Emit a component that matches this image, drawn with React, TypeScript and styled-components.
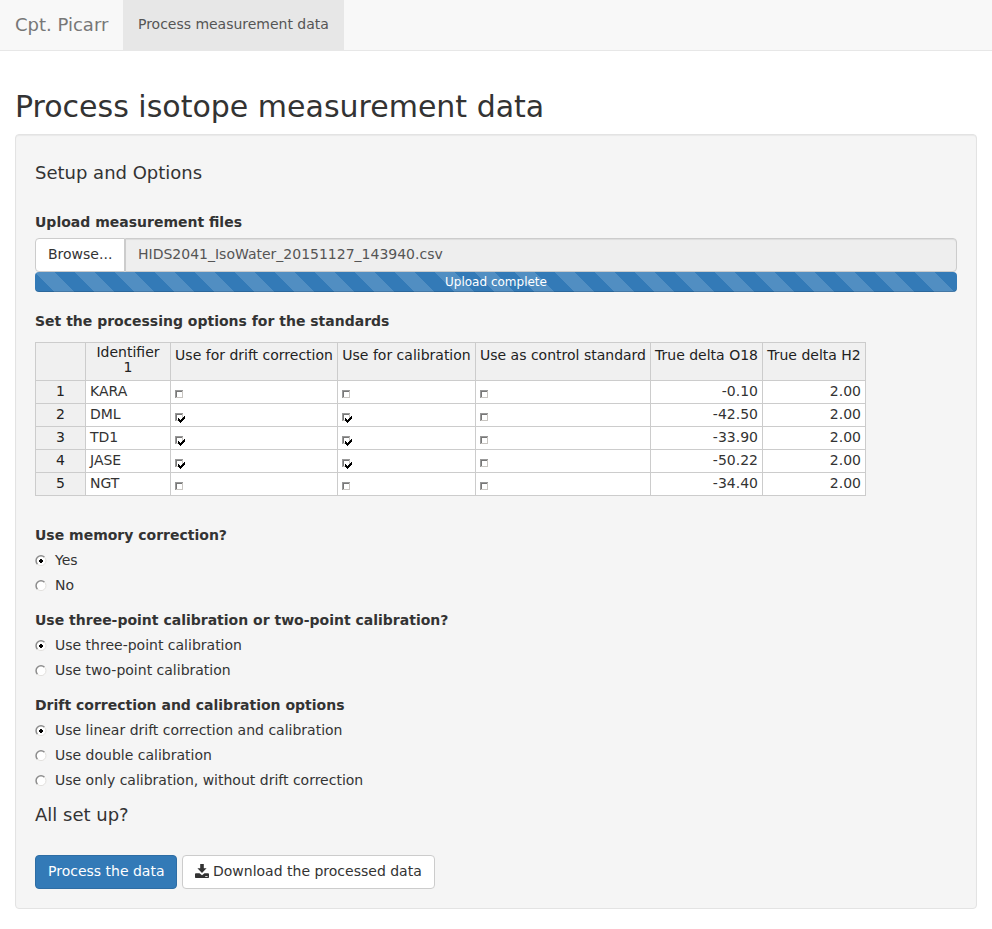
import React, { useState } from "react";
import styled, { createGlobalStyle, css } from "styled-components";

const GlobalStyle = createGlobalStyle`
  *, *::before, *::after { box-sizing: border-box; }
  body {
    margin: 0;
    background: #fff;
    color: #333;
    font: 14px/20px "DejaVu Sans", sans-serif;
  }
`;

const Navbar = styled.nav`
  display: flex;
  height: 51px;
  background: #f8f8f8;
  border-bottom: 1px solid #e7e7e7;
`;

const Brand = styled.a`
  width: 123px;
  padding: 15px;
  font-size: 18px;
  color: #777;
  white-space: nowrap;
`;

const NavTab = styled.a`
  width: 221px;
  padding: 14px 0 16px 15px;
  background: #e7e7e7;
  color: #555;
  letter-spacing: -0.02px;
  white-space: nowrap;
`;

const Page = styled.main`
  padding: 39px 15px 20px;
`;

const Title = styled.h2`
  margin: 0 0 11px;
  font-size: 30px;
  font-weight: 400;
  line-height: 33px;
`;

const Well = styled.section`
  height: 775px;
  padding: 28px 19px 19px;
  background: #f5f5f5;
  border: 1px solid #e3e3e3;
  border-radius: 4px;
  box-shadow: inset 0 1px 1px rgba(0, 0, 0, 0.05);
`;

const SectionHeading = styled.h4<{ $gap: number }>`
  margin: 0 0 ${(p) => p.$gap}px;
  font-size: 18px;
  font-weight: 400;
  line-height: 20px;
`;

const FieldLabel = styled.div<{ $gap?: number }>`
  height: 20px;
  margin-bottom: ${(p) => p.$gap ?? 5}px;
  font-weight: 700;
`;

const FileInput = styled.div`
  display: flex;
  height: 34px;
`;

const buttonBase = css`
  height: 34px;
  padding: 5px 12px 7px;
  border: 1px solid #ccc;
  border-radius: 4px;
  background: #fff;
  color: #333;
  font: inherit;
  white-space: nowrap;
`;

const BrowseButton = styled.button`
  ${buttonBase}
  width: 90px;
  border-radius: 4px 0 0 4px;
`;

const FileName = styled.div`
  flex: 1;
  padding: 5px 12px 7px;
  border: 1px solid #ccc;
  border-radius: 0 4px 4px 0;
  background: #eee;
  color: #555;
  box-shadow: inset 0 1px 1px rgba(0, 0, 0, 0.075);
`;

const ProgressBar = styled.div`
  height: 20px;
  margin-bottom: 19px;
  border-radius: 4px;
  background-color: #337ab7;
  background-image: linear-gradient(
    45deg,
    rgba(255, 255, 255, 0.15) 25%,
    transparent 25%,
    transparent 50%,
    rgba(255, 255, 255, 0.15) 50%,
    rgba(255, 255, 255, 0.15) 75%,
    transparent 75%
  );
  background-size: 40px 40px;
  box-shadow: inset 0 -1px 0 rgba(0, 0, 0, 0.15);
  color: #fff;
  font-size: 12px;
  text-align: center;
`;

const Table = styled.table`
  table-layout: fixed;
  width: 831px;
  margin-bottom: 29px;
  border-collapse: separate;
  border-spacing: 0;
  border-top: 1px solid #ccc;
  border-left: 1px solid #ccc;
`;

const HeadCell = styled.th<{ $tall?: boolean }>`
  height: 38px;
  padding: ${(p) => (p.$tall ? "2px 4px 0" : "2px 0 0")};
  border-right: 1px solid #ccc;
  border-bottom: 1px solid #ccc;
  background: #f0f0f0;
  color: #222;
  font-weight: 400;
  line-height: ${(p) => (p.$tall ? "15px" : "21px")};
  vertical-align: top;
  white-space: ${(p) => (p.$tall ? "normal" : "nowrap")};
`;

const Cell = styled.td<{ $align?: string; $head?: boolean }>`
  height: 23px;
  padding: 0 4px;
  border-right: 1px solid #ccc;
  border-bottom: 1px solid #ccc;
  background: ${(p) => (p.$head ? "#f0f0f0" : "#fff")};
  color: ${(p) => (p.$head ? "#222" : "#333")};
  line-height: 21px;
  text-align: ${(p) => p.$align ?? "left"};
  vertical-align: top;
`;

const CheckSvg = styled.svg`
  display: block;
  margin-top: 9px;
`;

const RadioGroup = styled.div`
  margin-bottom: 15px;
`;

const RadioRow = styled.label`
  display: flex;
  align-items: center;
  gap: 8px;
  height: 20px;
  margin-bottom: 5px;
`;

const Actions = styled.div`
  display: flex;
  gap: 5px;
`;

const PrimaryButton = styled.button`
  ${buttonBase}
  width: 142px;
  border-color: #2e6da4;
  background: #337ab7;
  color: #fff;
`;

const DownloadButton = styled.button`
  ${buttonBase}
  display: flex;
  gap: 4px;
  width: 253px;
`;

const IconSvg = styled.svg`
  flex: none;
  margin-top: 3px;
`;

function CheckBox({ checked }: { checked: boolean }) {
  return (
    <CheckSvg width="11" height="12" viewBox="0 0 11 12" shapeRendering="crispEdges">
      <rect width="8" height="8" fill="#c8c5c1" />
      <path d="M0 0H8V1H1V8H0Z" fill="#999" />
      <path d="M1 1H7V2H2V7H1Z" fill="#777" />
      <rect x="2" y="2" width="5" height="5" fill="#fff" />
      {checked && (
        <path d="M3 5H4V6H5V7H6V6H7V5H8V4H9V3H10V6H9V7H8V8H7V9H6V10H5V9H4V8H3Z" fill="#000" />
      )}
    </CheckSvg>
  );
}

function RadioMark({ checked }: { checked: boolean }) {
  return (
    <svg width="12" height="12" viewBox="0 0 12 12">
      <circle cx="6" cy="6.7" r="5" fill="#fff" />
      <path d="M2.5 10.2A4.9 4.9 0 0 1 9.5 3.2" fill="none" stroke="#8c8c8c" strokeWidth="1.5" />
      <path d="M9.5 3.2A4.9 4.9 0 0 1 2.5 10.2" fill="none" stroke="#e2e0dd" />
      {checked && (
        <path d="M5 5H7V6H8V8H7V9H5V8H4V6H5Z" fill="#000" shapeRendering="crispEdges" />
      )}
    </svg>
  );
}

function DownloadIcon() {
  return (
    <IconSvg width="14" height="14" viewBox="0 0 14 14" fill="#333">
      <path d="M5.2 0H8.8V4.2H11.6L7 9L2.4 4.2H5.2Z" />
      <path d="M.6 9.3H4.5L7 11.2L9.5 9.3H13.4L14 10V13.3Q14 14 13.3 14H.7Q0 14 0 13.3V10Z" />
      <path d="M10.2 12H12.6V12.8H10.2Z" fill="#fff" />
    </IconSvg>
  );
}

function Choice({ label, options }: { label: string; options: string[] }) {
  const [selected, setSelected] = useState(0);
  return (
    <RadioGroup>
      <FieldLabel>{label}</FieldLabel>
      {options.map((option, i) => (
        <RadioRow key={option} onClick={() => setSelected(i)}>
          <RadioMark checked={i === selected} />
          {option}
        </RadioRow>
      ))}
    </RadioGroup>
  );
}

const columnWidths = [50, 85, 167, 138, 175, 112, 103];
const headings = [
  "Use for drift correction",
  "Use for calibration",
  "Use as control standard",
  "True delta O18",
  "True delta H2",
];
const standards = [
  { name: "KARA", flags: [false, false, false], o18: "-0.10", h2: "2.00" },
  { name: "DML", flags: [true, true, false], o18: "-42.50", h2: "2.00" },
  { name: "TD1", flags: [true, true, false], o18: "-33.90", h2: "2.00" },
  { name: "JASE", flags: [true, true, false], o18: "-50.22", h2: "2.00" },
  { name: "NGT", flags: [false, false, false], o18: "-34.40", h2: "2.00" },
];

export default function App() {
  return (
    <>
      <GlobalStyle />
      <Navbar>
        <Brand>Cpt. Picarr</Brand>
        <NavTab>Process measurement data</NavTab>
      </Navbar>
      <Page>
        <Title>Process isotope measurement data</Title>
        <Well>
          <SectionHeading $gap={29}>Setup and Options</SectionHeading>
          <FieldLabel $gap={6}>Upload measurement files</FieldLabel>
          <FileInput>
            <BrowseButton>Browse...</BrowseButton>
            <FileName>HIDS2041_IsoWater_20151127_143940.csv</FileName>
          </FileInput>
          <ProgressBar>Upload complete</ProgressBar>
          <FieldLabel $gap={11}>Set the processing options for the standards</FieldLabel>
          <Table>
            <colgroup>
              {columnWidths.map((width, i) => (
                <col key={i} width={width} />
              ))}
            </colgroup>
            <thead>
              <tr>
                <HeadCell />
                <HeadCell $tall>Identifier 1</HeadCell>
                {headings.map((heading) => (
                  <HeadCell key={heading}>{heading}</HeadCell>
                ))}
              </tr>
            </thead>
            <tbody>
              {standards.map((row, i) => (
                <tr key={row.name}>
                  <Cell $head $align="center">{i + 1}</Cell>
                  <Cell>{row.name}</Cell>
                  {row.flags.map((flag, j) => (
                    <Cell key={j}>
                      <CheckBox checked={flag} />
                    </Cell>
                  ))}
                  <Cell $align="right">{row.o18}</Cell>
                  <Cell $align="right">{row.h2}</Cell>
                </tr>
              ))}
            </tbody>
          </Table>
          <Choice label="Use memory correction?" options={["Yes", "No"]} />
          <Choice
            label="Use three-point calibration or two-point calibration?"
            options={["Use three-point calibration", "Use two-point calibration"]}
          />
          <Choice
            label="Drift correction and calibration options"
            options={[
              "Use linear drift correction and calibration",
              "Use double calibration",
              "Use only calibration, without drift correction",
            ]}
          />
          <SectionHeading $gap={30}>All set up?</SectionHeading>
          <Actions>
            <PrimaryButton>Process the data</PrimaryButton>
            <DownloadButton>
              <DownloadIcon />
              Download the processed data
            </DownloadButton>
          </Actions>
        </Well>
      </Page>
    </>
  );
}
